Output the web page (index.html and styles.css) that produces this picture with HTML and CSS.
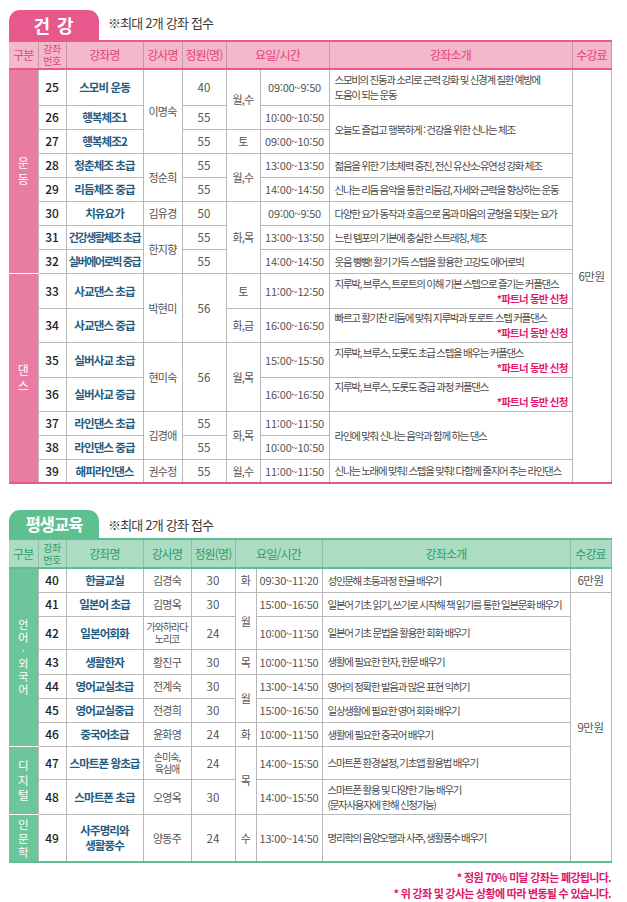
FILE: index.html
```html
<!DOCTYPE html>
<html lang="ko">
<head>
<meta charset="utf-8">
<title>강좌 안내</title>
<link rel="stylesheet" href="styles.css">
</head>
<body>
<section class="section s1 pink">
  <div class="title">
    <div class="tab tab1">건 강</div>
    <div class="note note1">※최대 2개 강좌 접수</div>
  </div>
  <table class="tbl t1">
    <colgroup>
      <col style="width:29px"><col style="width:28px"><col style="width:77px"><col style="width:39px"><col style="width:44px"><col style="width:34px"><col style="width:69px"><col style="width:243px"><col style="width:39px">
    </colgroup>
    <thead>
      <tr class="hd28">
        <th class="first">구분</th><th class="two">강좌<br>번호</th><th>강좌명</th><th>강사명</th><th>정원(명)</th><th colspan="2">요일/시간</th><th>강좌소개</th><th>수강료</th>
      </tr>
    </thead>
    <tbody>
      <tr class="h36">
        <td class="cat" rowspan="8">운<br>동</td>
        <td class="no">25</td><td class="nm">스모비 운동</td>
        <td class="tc" rowspan="3">이명숙</td>
        <td class="num">40</td>
        <td class="tc" rowspan="2">월,수</td>
        <td class="tm">09:00~9:50</td>
        <td class="desc">스모비의 진동과 소리로 근력 강화 및 신경계 질환 예방에<br>도움이 되는 운동</td>
        <td class="fee" rowspan="15">6만원</td>
      </tr>
      <tr class="h24"><td class="no">26</td><td class="nm">행복체조1</td><td class="num">55</td><td class="tm">10:00~10:50</td><td class="desc" rowspan="2">오늘도 즐겁고 행복하게 : 건강을 위한 신나는 체조</td></tr>
      <tr class="h24"><td class="no">27</td><td class="nm">행복체조2</td><td class="num">55</td><td class="tc">토</td><td class="tm">09:00~10:50</td></tr>
      <tr class="h24"><td class="no">28</td><td class="nm">청춘체조 초급</td><td class="tc" rowspan="2">정순희</td><td class="num">55</td><td class="tc" rowspan="2">월,수</td><td class="tm">13:00~13:50</td><td class="desc">젊음을 위한 기초체력 증진, 전신 유산소·유연성 강화 체조</td></tr>
      <tr class="h24"><td class="no">29</td><td class="nm">리듬체조 중급</td><td class="num">55</td><td class="tm">14:00~14:50</td><td class="desc">신나는 리듬 음악을 통한 리듬감, 자세와 근력을 향상하는 운동</td></tr>
      <tr class="h24"><td class="no">30</td><td class="nm">치유요가</td><td class="tc">김유경</td><td class="num">50</td><td class="tc" rowspan="3">화,목</td><td class="tm">09:00~9:50</td><td class="desc">다양한 요가 동작과 호흡으로 몸과 마음의 균형을 되찾는 요가</td></tr>
      <tr class="h24"><td class="no">31</td><td class="nm tight">건강생활체조 초급</td><td class="tc" rowspan="2">한지향</td><td class="num">55</td><td class="tm">13:00~13:50</td><td class="desc">느린 템포의 기본에 충실한 스트레칭, 체조</td></tr>
      <tr class="h24"><td class="no">32</td><td class="nm tight">실버에어로빅 중급</td><td class="num">55</td><td class="tm">14:00~14:50</td><td class="desc">웃음 빵빵! 활기 가득 스텝을 활용한 고강도 에어로빅</td></tr>
      <tr class="h35">
        <td class="cat" rowspan="7">댄<br>스</td>
        <td class="no">33</td><td class="nm">사교댄스 초급</td><td class="tc" rowspan="2">박현미</td><td class="num" rowspan="2">56</td><td class="tc">토</td><td class="tm">11:00~12:50</td>
        <td class="desc">지루박, 브루스, 트로트의 이해 기본 스텝으로 즐기는 커플댄스<span class="ptn">*파트너 동반 신청</span></td>
      </tr>
      <tr class="h34"><td class="no">34</td><td class="nm">사교댄스 중급</td><td class="tc">화,금</td><td class="tm">16:00~16:50</td><td class="desc">빠르고 활기찬 리듬에 맞춰 지루박과 토로트 스텝 커플댄스<span class="ptn">*파트너 동반 신청</span></td></tr>
      <tr class="h35"><td class="no">35</td><td class="nm">실버사교 초급</td><td class="tc" rowspan="2">현미숙</td><td class="num" rowspan="2">56</td><td class="tc" rowspan="2">월,목</td><td class="tm">15:00~15:50</td><td class="desc">지루박, 브루스, 도롯도 초급 스텝을 배우는 커플댄스<span class="ptn">*파트너 동반 신청</span></td></tr>
      <tr class="h34"><td class="no">36</td><td class="nm">실버사교 중급</td><td class="tm">16:00~16:50</td><td class="desc">지루박, 브루스, 도롯도 중급 과정 커플댄스<span class="ptn">*파트너 동반 신청</span></td></tr>
      <tr class="h24"><td class="no">37</td><td class="nm">라인댄스 초급</td><td class="tc" rowspan="2">김경애</td><td class="num">55</td><td class="tc" rowspan="2">화,목</td><td class="tm">11:00~11:50</td><td class="desc" rowspan="2">라인에 맞춰 신나는 음악과 함께 하는 댄스</td></tr>
      <tr class="h24"><td class="no">38</td><td class="nm">라인댄스 중급</td><td class="num">55</td><td class="tm">10:00~10:50</td></tr>
      <tr class="h24"><td class="no">39</td><td class="nm">해피라인댄스</td><td class="tc">권수정</td><td class="num">55</td><td class="tc">월,수</td><td class="tm">11:00~11:50</td><td class="desc">신나는 노래에 맞춰! 스텝을 맞춰! 다함께 줄지어 추는 라인댄스</td></tr>
    </tbody>
  </table>
</section>

<section class="section s2 green">
  <div class="title">
    <div class="tab tab2">평생교육</div>
    <div class="note">※최대 2개 강좌 접수</div>
  </div>
  <table class="tbl t2">
    <colgroup>
      <col style="width:29px"><col style="width:28px"><col style="width:77px"><col style="width:48px"><col style="width:44px"><col style="width:21px"><col style="width:66px"><col style="width:248px"><col style="width:41px">
    </colgroup>
    <thead>
      <tr class="hd29">
        <th class="first">구분</th><th class="two">강좌<br>번호</th><th>강좌명</th><th>강사명</th><th>정원(명)</th><th colspan="2">요일/시간</th><th>강좌소개</th><th>수강료</th>
      </tr>
    </thead>
    <tbody>
      <tr class="h24">
        <td class="cat cat-lang" rowspan="7">언<br>어<br>·<br>외<br>국<br>어</td>
        <td class="no">40</td><td class="nm">한글교실</td><td class="tc">김경숙</td><td class="num">30</td><td class="tc">화</td><td class="tm">09:30~11:20</td><td class="desc">성인문해 초등과정 한글 배우기</td><td class="fee">6만원</td>
      </tr>
      <tr class="h24"><td class="no">41</td><td class="nm">일본어 초급</td><td class="tc">김명옥</td><td class="num">30</td><td class="tc" rowspan="2">월</td><td class="tm">15:00~16:50</td><td class="desc">일본어 기초 읽기, 쓰기로 시작해 책 읽기를 통한 일본문화 배우기</td><td class="fee" rowspan="9">9만원</td></tr>
      <tr class="h33"><td class="no">42</td><td class="nm">일본어회화</td><td class="tc sm">가와하라다<br>노리코</td><td class="num">24</td><td class="tm">10:00~11:50</td><td class="desc">일본어 기초 문법을 활용한 회화 배우기</td></tr>
      <tr class="h25"><td class="no">43</td><td class="nm">생활한자</td><td class="tc">황진구</td><td class="num">30</td><td class="tc">목</td><td class="tm">10:00~11:50</td><td class="desc">생활에 필요한 한자, 한문 배우기</td></tr>
      <tr class="h24"><td class="no">44</td><td class="nm">영어교실초급</td><td class="tc">전계숙</td><td class="num">30</td><td class="tc" rowspan="2">월</td><td class="tm">13:00~14:50</td><td class="desc">영어의 정확한 발음과 많은 표현 익히기</td></tr>
      <tr class="h24"><td class="no">45</td><td class="nm">영어교실중급</td><td class="tc">전경희</td><td class="num">30</td><td class="tm">15:00~16:50</td><td class="desc">일상생활에 필요한 영어 회화 배우기</td></tr>
      <tr class="h24"><td class="no">46</td><td class="nm">중국어초급</td><td class="tc">윤화영</td><td class="num">24</td><td class="tc">화</td><td class="tm">10:00~11:50</td><td class="desc">생활에 필요한 중국어 배우기</td></tr>
      <tr class="h33">
        <td class="cat cat-dig" rowspan="2">디<br>지<br>털</td>
        <td class="no">47</td><td class="nm">스마트폰 왕초급</td><td class="tc sm">손미숙,<br>육심애</td><td class="num">24</td><td class="tc" rowspan="2">목</td><td class="tm">14:00~15:50</td><td class="desc">스마트폰 환경설정, 기초앱 활용법 배우기</td>
      </tr>
      <tr class="h35"><td class="no">48</td><td class="nm">스마트폰 초급</td><td class="tc">오영옥</td><td class="num">30</td><td class="tm">14:00~15:50</td><td class="desc">스마트폰 활용 및 다양한 기능 배우기<br>(문자사용자에 한해 신청가능)</td></tr>
      <tr class="h48">
        <td class="cat cat-hum">인<br>문<br>학</td>
        <td class="no">49</td><td class="nm two-line">사주명리와<br>생활풍수</td><td class="tc">양동주</td><td class="num">24</td><td class="tc">수</td><td class="tm">13:00~14:50</td><td class="desc">명리학의 음양오행과 사주, 생활풍수 배우기</td>
      </tr>
    </tbody>
  </table>
  <div class="foot">
    <p>* 정원 70% 미달 강좌는 폐강됩니다.</p>
    <p>* 위 강좌 및 강사는 상황에 따라 변동될 수 있습니다.</p>
  </div>
</section>
</body>
</html>
```

FILE: styles.css
```css
* { box-sizing: border-box; }
html, body { margin: 0; padding: 0; background: #fff; }
body {
  width: 627px;
  font-family: "Noto Sans CJK KR", "Noto Sans", sans-serif;
  color: #555;
}

.section { margin-left: 9px; width: 602px; }
.s1 { padding-top: 10px; }
.s2 { margin-top: 26px; }

.title { display: flex; align-items: center; }
.tab {
  width: 90px;
  border-radius: 11px 11px 0 0;
  color: #fff;
  font-weight: 700;
  display: flex;
  align-items: center;
  justify-content: center;
}
.tab1 { height: 30px; font-size: 18px; letter-spacing: 1px; }
.tab2 { height: 28px; font-size: 16.5px; letter-spacing: -1px; }
.pink .tab { background: #e8588c; }
.green .tab { background: #5ebf8f; }

.note {
  margin-left: 9px;
  font-size: 13px;
  color: #3a3a3a;
  letter-spacing: -0.8px;
}
.note1 { margin-bottom: 6px; }

.tbl {
  border-collapse: collapse;
  table-layout: fixed;
  width: 602px;
}
.t1 { border-bottom: 2px solid #e8588c; border-right: 1px solid #b5b5b5; }
.t2 { border-bottom: 2px solid #5ebf8f; border-right: 1px solid #b5b5b5; }

.tbl th, .tbl td {
  padding: 0 3px;
  text-align: center;
  vertical-align: middle;
  border: 1px solid #b8b8b8;
  font-size: 11px;
  line-height: 14px;
}

.tbl th {
  font-weight: 400;
  font-size: 12px;
  letter-spacing: -0.8px;
  padding: 0;
  white-space: nowrap;
}
.t1 th {
  background: #f3b8ca;
  color: #e6427c;
  border-top: 2px solid #e8588c;
  border-bottom: 2px solid #e8588c;
  border-left: 1px solid #c59aa8;
  border-right: 1px solid #c59aa8;
}
.t2 th {
  background: #addcc4;
  color: #2c9f69;
  border-top: 2px solid #5ebf8f;
  border-bottom: 2px solid #5ebf8f;
  border-left: 1px solid #8fbea6;
  border-right: 1px solid #8fbea6;
}
.tbl th.first { border-left: none; }
.tbl th.two { font-size: 10px; line-height: 12px; letter-spacing: -0.5px; }

.hd28 { height: 28px; }
.hd29 { height: 29px; }
.h24 { height: 24px; }
.h25 { height: 25px; }
.h33 { height: 33px; }
.h34 { height: 34px; }
.h35 { height: 35px; }
.h36 { height: 36px; }
.h48 { height: 48px; }

.tbl td.cat {
  color: #fff;
  font-size: 12px;
  line-height: 16px;
  border-left: none;
  border-top: 1px solid #fff;
  border-bottom: 1px solid #fff;
  padding: 0;
}
.t1 td.cat { background: #e97ca1; }
.t2 td.cat { background: #6dc59b; }
.tbl td.cat-lang { font-size: 11px; line-height: 13px; }
.tbl td.cat-dig { font-size: 11.5px; line-height: 15px; }
.tbl td.cat-hum { font-size: 11.5px; line-height: 14px; }

.tbl td.no {
  color: #222;
  font-size: 12px;
  font-weight: 500;
  padding: 0;
}
.tbl td.nm {
  color: #255c82;
  font-weight: 700;
  font-size: 11.5px;
  letter-spacing: -0.9px;
  padding: 0 1px;
}
.tbl td.nm.tight { letter-spacing: -1.4px; font-size: 11px; }
.tbl td.two-line { line-height: 15px; }

.tbl td.tc { letter-spacing: -0.8px; padding: 0; }
.tbl td.sm { font-size: 10px; line-height: 12px; letter-spacing: -1px; }
.tbl td.num { font-size: 11.5px; }
.tbl td.tm { font-size: 11px; letter-spacing: -0.2px; padding: 0; }

.tbl td.desc {
  text-align: left;
  font-size: 10.5px;
  line-height: 15px;
  letter-spacing: -1.3px;
  padding: 0 4px 0 5px;
  color: #4a4a4a;
}
.ptn {
  display: block;
  text-align: right;
  color: #e5176f;
  font-weight: 700;
  letter-spacing: -0.8px;
}
.tbl td.fee { font-size: 11.5px; letter-spacing: -0.5px; padding: 0; }

.foot { text-align: right; padding-top: 6px; }
.foot p {
  margin: 0;
  color: #e0166c;
  font-size: 11px;
  line-height: 16px;
  font-weight: 700;
  letter-spacing: -0.7px;
}
```
